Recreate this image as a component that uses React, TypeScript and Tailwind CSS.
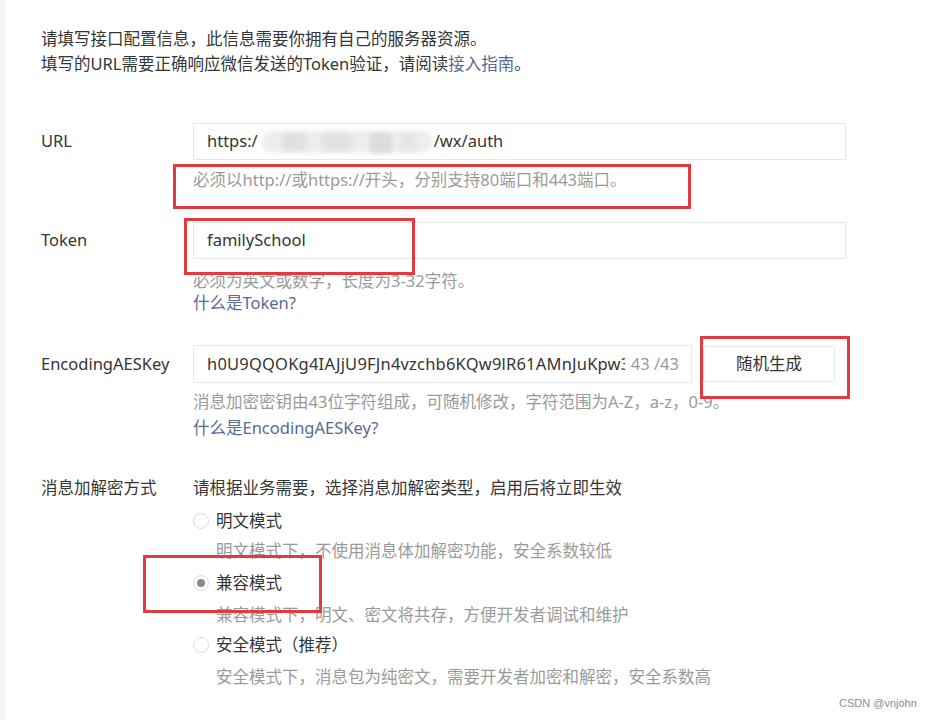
import React from "react";

const font = { fontFamily: '"Noto Sans", "Noto Sans CJK SC", sans-serif' };

function Radio({ checked }: { checked?: boolean }) {
  return (
    <span className="relative inline-flex h-[16px] w-[16px] shrink-0 items-center justify-center rounded-full border border-[#dcdde0] bg-white">
      {checked && <span className="h-[8px] w-[8px] rounded-full bg-[#8a8a8a]" />}
    </span>
  );
}

export default function App() {
  return (
    <div className="relative flex h-[720px] w-[930px] overflow-hidden bg-white text-[16.5px] text-[#353535]" style={font}>
      <div className="h-full w-[5px] shrink-0 bg-[#f3f4f6]" />
      <div className="flex flex-col pl-[36px]">
        {/* intro */}
        <div className="pt-[26px] leading-[25px]">
          <div>请填写接口配置信息，此信息需要你拥有自己的服务器资源。</div>
          <div>
            填写的URL需要正确响应微信发送的Token验证，请阅读<span className="text-[#576b95]">接入指南</span>。
          </div>
        </div>

        {/* URL */}
        <div className="mt-[47px] flex">
          <div className="flex h-[37px] w-[152px] items-center">URL</div>
          <div className="flex flex-col">
            <div className="flex h-[37px] w-[653px] items-center border border-[#e4e8eb] px-[13px]">
              <span>https:/</span>
              <span className="relative mx-[2px] inline-block h-[24px] w-[172px]">
                <span className="absolute left-[2px] top-[1px] h-[22px] w-[170px] rounded-[10px] bg-[#eeeeee] blur-[2px]" />
                <span className="absolute left-[22px] top-[3px] h-[18px] w-[24px] rounded bg-[#e0e0e0] blur-[2px]" />
                <span className="absolute left-[62px] top-[3px] h-[18px] w-[30px] rounded bg-[#e2e2e2] blur-[2px]" />
                <span className="absolute left-[110px] top-[3px] h-[20px] w-[22px] rounded bg-[#dcdcdc] blur-[2px]" />
                <span className="absolute left-[140px] top-[3px] h-[18px] w-[16px] rounded bg-[#e6e6e6] blur-[2px]" />
              </span>
              <span>/wx/auth</span>
            </div>
            <div className="mt-[9px] leading-[22px] text-[#9a9a9a]">必须以http://或https://开头，分别支持80端口和443端口。</div>
          </div>
        </div>

        {/* Token */}
        <div className="mt-[31px] flex">
          <div className="flex h-[37px] w-[152px] items-center">Token</div>
          <div className="flex flex-col">
            <div className="flex h-[37px] w-[653px] items-center border border-[#e4e8eb] px-[13px]">familySchool</div>
            <div className="mt-[11px] leading-[22px] text-[#9a9a9a]">必须为英文或数字，长度为3-32字符。</div>
            <div className="leading-[22px] text-[#576b95]">什么是Token?</div>
          </div>
        </div>

        {/* AES */}
        <div className="mt-[31px] flex">
          <div className="flex h-[38px] w-[152px] items-center">EncodingAESKey</div>
          <div className="flex flex-col">
            <div className="flex items-center">
              <div className="flex h-[38px] w-[499px] items-center border border-[#e4e8eb] pl-[13px] pr-[12px]">
                <span className="min-w-0 flex-1 overflow-hidden whitespace-nowrap tracking-[0.2px]">h0U9QQOKg4IAJjU9FJn4vzchb6KQw9lR61AMnJuKpw3</span>
                <span className="ml-[6px] shrink-0 text-[#9a9a9a]">43 /43</span>
              </div>
              <div className="ml-[11px] flex h-[36px] w-[132px] items-center justify-center rounded-[3px] border border-[#e4e8eb] bg-white">
                随机生成
              </div>
            </div>
            <div className="mt-[8px] leading-[22px] text-[#9a9a9a]">消息加密密钥由43位字符组成，可随机修改，字符范围为A-Z，a-z，0-9。</div>
            <div className="mt-[4px] leading-[22px] text-[#576b95]">什么是EncodingAESKey?</div>
          </div>
        </div>

        {/* mode */}
        <div className="mt-[38px] flex">
          <div className="w-[152px] leading-[22px]">消息加解密方式</div>
          <div className="flex flex-col">
            <div className="leading-[22px]">请根据业务需要，选择消息加解密类型，启用后将立即生效</div>
            <div className="mt-[11px] flex items-center gap-[7px] leading-[22px]">
              <Radio />
              <span>明文模式</span>
            </div>
            <div className="mt-[8px] pl-[23px] leading-[22px] text-[#9a9a9a]">明文模式下，不使用消息体加解密功能，安全系数较低</div>
            <div className="mt-[10px] flex items-center gap-[7px] leading-[22px]">
              <Radio checked />
              <span>兼容模式</span>
            </div>
            <div className="mt-[10px] pl-[23px] leading-[22px] text-[#9a9a9a]">兼容模式下，明文、密文将共存，方便开发者调试和维护</div>
            <div className="mt-[8px] flex items-center gap-[7px] leading-[22px]">
              <Radio />
              <span>安全模式（推荐）</span>
            </div>
            <div className="mt-[10px] pl-[23px] leading-[22px] text-[#9a9a9a]">安全模式下，消息包为纯密文，需要开发者加密和解密，安全系数高</div>
          </div>
        </div>
      </div>

      {/* red highlight boxes */}
      <div className="absolute left-[173px] top-[164px] h-[45px] w-[518px] border-[3px] border-[#e23b3f]" />
      <div className="absolute left-[184px] top-[218px] h-[57px] w-[231px] border-[3px] border-[#e23b3f]" />
      <div className="absolute left-[700px] top-[336px] h-[63px] w-[150px] border-[3px] border-[#e23b3f]" />
      <div className="absolute left-[143px] top-[555px] h-[58px] w-[179px] border-[3px] border-[#e23b3f]" />

      <div className="absolute left-[839px] top-[696px] text-[11px] leading-[14px] text-[#8c8c8c]" style={{ fontFamily: '"Liberation Sans", sans-serif' }}>
        CSDN @vnjohn
      </div>
    </div>
  );
}
